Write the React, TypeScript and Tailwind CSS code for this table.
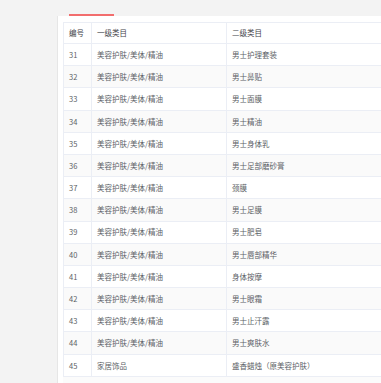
import React from 'react';

interface Row {
  id: number;
  first: string;
  second: string;
}

const rows: Row[] = [
  { id: 31, first: '美容护肤/美体/精油', second: '男士护理套装' },
  { id: 32, first: '美容护肤/美体/精油', second: '男士鼻贴' },
  { id: 33, first: '美容护肤/美体/精油', second: '男士面膜' },
  { id: 34, first: '美容护肤/美体/精油', second: '男士精油' },
  { id: 35, first: '美容护肤/美体/精油', second: '男士身体乳' },
  { id: 36, first: '美容护肤/美体/精油', second: '男士足部磨砂膏' },
  { id: 37, first: '美容护肤/美体/精油', second: '颈膜' },
  { id: 38, first: '美容护肤/美体/精油', second: '男士足膜' },
  { id: 39, first: '美容护肤/美体/精油', second: '男士肥皂' },
  { id: 40, first: '美容护肤/美体/精油', second: '男士唇部精华' },
  { id: 41, first: '美容护肤/美体/精油', second: '身体按摩' },
  { id: 42, first: '美容护肤/美体/精油', second: '男士眼霜' },
  { id: 43, first: '美容护肤/美体/精油', second: '男士止汗露' },
  { id: 44, first: '美容护肤/美体/精油', second: '男士爽肤水' },
  { id: 45, first: '家居饰品', second: '盛香蜡烛（原美容护肤）' },
];

export default function App() {
  return (
    <div
      className="h-[383px] w-[381px] overflow-hidden bg-[#f3f3f3] text-[7.5px]"
      style={{ fontFamily: '"Noto Sans CJK SC", "Noto Sans", sans-serif' }}
    >
      {/* tab strip, scrolled mostly out of view */}
      <div className="relative h-[16px]">
        <div className="absolute bottom-0 left-[69px] h-[2px] w-[45px] bg-[#f26d6d]" />
      </div>

      <div className="flex h-[367px]">
        <div className="w-[57px] shrink-0" />
        <div className="flex-1 border-l border-[#e6e6e6] bg-white pl-[5px] pt-[6px]">
          <div className="border-l border-t border-[#ebeef5]">
            <div className="flex h-[21px] items-center border-b border-[#ebeef5] text-[#3f434a]">
              <div className="flex h-full w-[28px] shrink-0 items-center border-r border-[#ebeef5] pl-[5px]">编号</div>
              <div className="flex h-full w-[135px] shrink-0 items-center border-r border-[#ebeef5] pl-[5px]">一级类目</div>
              <div className="flex h-full flex-1 items-center pl-[5px]">二级类目</div>
            </div>
            {rows.map((row) => (
              <div
                key={row.id}
                className={`flex h-[22.2px] items-center border-b border-[#ebeef5] text-[#5c5f66] ${
                  row.id % 2 === 0 ? 'bg-[#fafafa]' : 'bg-white'
                }`}
              >
                <div className="flex h-full w-[28px] shrink-0 items-center border-r border-[#ebeef5] pl-[5px]">{row.id}</div>
                <div className="flex h-full w-[135px] shrink-0 items-center border-r border-[#ebeef5] pl-[5px]">{row.first}</div>
                <div className="flex h-full flex-1 items-center whitespace-nowrap pl-[5px]">{row.second}</div>
              </div>
            ))}
          </div>
          <div className="h-[10px] bg-[#fbfbfb]" />
        </div>
      </div>
    </div>
  );
}
